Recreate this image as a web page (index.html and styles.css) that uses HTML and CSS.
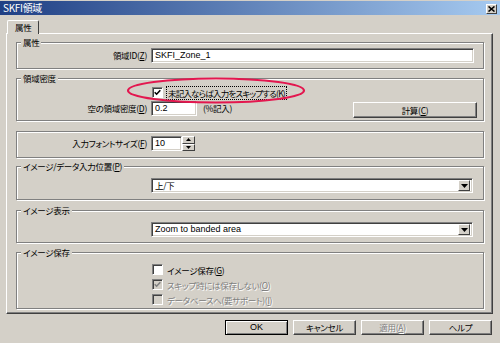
FILE: index.html
```html
<!DOCTYPE html>
<html lang="ja">
<head>
    <meta charset="UTF-8">
    <title>SKFI領域</title>
    <link rel="stylesheet" href="styles.css">
</head>
<body>
    <div class="window">
        <div class="titlebar">
            <span class="title">SKFI領域</span>
            <span class="close"><svg width="7" height="6" viewBox="0 0 7 6"><path d="M0.5 0.5 L6.5 5.5 M6.5 0.5 L0.5 5.5" stroke="#000" stroke-width="1.6"/></svg></span>
        </div>
        <div class="tabs">
            <div class="tab">属性</div>
        </div>
        <div class="panel">
            <div class="group g1">
                <div class="legend">属性</div>
                <div class="row">
                    <span class="lbl">領域ID(<u>Z</u>)</span>
                    <div class="edit latin id">SKFI_Zone_1</div>
                </div>
            </div>
            <div class="group g2">
                <div class="legend">領域密度</div>
                <div class="check-row">
                    <span class="box"><svg width="7" height="7" viewBox="0 0 7 7"><path d="M0.7 3.3 L2.6 5.2 L6.3 1.2" stroke="#000" stroke-width="1.6" fill="none"/></svg></span>
                    <span class="focus">未記入ならば入力をスキップする(<u>K</u>)</span>
                </div>
                <div class="row top">
                    <span class="lbl">空の領域密度(<u>D</u>)</span>
                    <div class="edit latin density">0.2</div>
                    <span class="unit">(%記入)</span>
                    <div class="btn calc">計算(<u>C</u>)</div>
                </div>
            </div>
            <div class="group g3">
                <div class="row">
                    <span class="lbl">入力フォントサイズ(<u>F</u>)</span>
                    <div class="edit latin size">10</div>
                    <div class="spin">
                        <span class="spin-btn"><svg width="5" height="3" viewBox="0 0 5 3"><path d="M0 3 L2.5 0 L5 3 Z" fill="#000"/></svg></span>
                        <span class="spin-btn"><svg width="5" height="3" viewBox="0 0 5 3"><path d="M0 0 L2.5 3 L5 0 Z" fill="#000"/></svg></span>
                    </div>
                </div>
            </div>
            <div class="group g4">
                <div class="legend">イメージ/データ入力位置(<u>P</u>)</div>
                <div class="row">
                    <span class="lbl"></span>
                    <div class="edit combo">
                        <span>上/下</span>
                        <span class="drop"><svg width="7" height="4" viewBox="0 0 7 4"><path d="M0 0 L3.5 4 L7 0 Z" fill="#000"/></svg></span>
                    </div>
                </div>
            </div>
            <div class="group g5">
                <div class="legend">イメージ表示</div>
                <div class="row">
                    <span class="lbl"></span>
                    <div class="edit combo latin">
                        <span>Zoom to banded area</span>
                        <span class="drop"><svg width="7" height="4" viewBox="0 0 7 4"><path d="M0 0 L3.5 4 L7 0 Z" fill="#000"/></svg></span>
                    </div>
                </div>
            </div>
            <div class="group g6">
                <div class="legend">イメージ保存</div>
                <div class="check-row">
                    <span class="box"></span>
                    <span>イメージ保存(<u>G</u>)</span>
                </div>
                <div class="check-row off">
                    <span class="box"><svg width="7" height="7" viewBox="0 0 7 7"><path d="M0.7 3.3 L2.6 5.2 L6.3 1.2" stroke="#808080" stroke-width="1.6" fill="none"/></svg></span>
                    <span>スキップ時には保存しない(<u>O</u>)</span>
                </div>
                <div class="check-row off">
                    <span class="box"></span>
                    <span>データベースへ(要サポート)(<u>I</u>)</span>
                </div>
            </div>
        </div>
        <div class="buttons">
            <div class="btn default latin">OK</div>
            <div class="btn">キャンセル</div>
            <div class="btn off">適用(<u>A</u>)</div>
            <div class="btn">ヘルプ</div>
        </div>
        <svg class="mark" width="182" height="28" viewBox="0 0 182 28"><ellipse cx="90" cy="13.5" rx="88" ry="12" fill="none" stroke="#e3174f" stroke-width="2.2"/></svg>
    </div>
</body>
</html>
```

FILE: styles.css
```css
* {
    box-sizing: border-box;
}
body {
    margin: 0;
    background: #d4d0c8;
    font-family: "Noto Sans CJK JP", "Liberation Sans", sans-serif;
    font-size: 8.5px;
    letter-spacing: -0.3px;
    font-feature-settings: "palt";
    color: #000;
}
u {
    text-decoration-thickness: 1px;
}
.latin {
    font-family: "Liberation Sans", "Noto Sans CJK JP", sans-serif;
    font-size: 9px;
    letter-spacing: 0;
}
.window {
    width: 500px;
    height: 343px;
    padding-top: 1px;
    position: relative;
    overflow: hidden;
}

/* title bar */
.titlebar {
    height: 14px;
    background: linear-gradient(to right, #1f3f84, #a6caf0);
    display: flex;
    align-items: center;
    justify-content: space-between;
    padding: 0 3px 0 3px;
    color: #fff;
}
.title {
    font-size: 10px;
    line-height: 14px;
}
.close {
    width: 11px;
    height: 10px;
    margin-top: 2px;
    background: #d4d0c8;
    border: 1px solid;
    border-color: #fff #404040 #404040 #fff;
    display: flex;
    align-items: center;
    justify-content: center;
}

/* tab */
.tabs {
    display: flex;
    padding-left: 7px;
    margin-top: 5px;
}
.tab {
    height: 14px;
    padding: 0 7px;
    line-height: 13px;
    border: 1px solid;
    border-color: #fff #404040 transparent #fff;
    border-bottom: none;
    border-radius: 2px 2px 0 0;
    background: #d4d0c8;
    margin-bottom: -1px;
    position: relative;
    z-index: 1;
}
.panel {
    margin-left: 6px;
    width: 487px;
    height: 281px;
    border: 1px solid;
    border-color: #fff #404040 #404040 #fff;
    box-shadow: inset -1px -1px 0 #808080;
    padding-left: 9px;
}

/* groups: legend sits on the top line */
.group {
    width: 468px;
    border: 1px solid #808080;
    box-shadow: inset 1px 1px 0 #fff, 1px 1px 0 #fff;
}
.legend {
    width: fit-content;
    height: 12px;
    line-height: 12px;
    margin: -7px 0 0 4px;
    padding: 0 2px;
    background: #d4d0c8;
    white-space: nowrap;
}
.g1 { margin-top: 8px; height: 27px; }
.g2 { margin-top: 9px; height: 43px; }
.g3 { margin-top: 10px; height: 27px; padding-top: 4px; }
.g4 { margin-top: 8px; height: 34px; }
.g5 { margin-top: 10px; height: 33px; }
.g6 { margin-top: 9px; height: 57px; }
.g1 .legend { margin-bottom: 0; }
.g2 .legend { margin-bottom: 2px; }
.g4 .legend { margin-bottom: 6px; }
.g5 .legend { margin-bottom: 6px; }
.g6 .legend { margin-bottom: 4px; }

.row {
    display: flex;
    align-items: center;
    height: 15px;
}
.row.top {
    align-items: flex-start;
    height: 17px;
    margin-top: 2px;
}
.lbl {
    width: 130px;
    margin-right: 4px;
    text-align: right;
    white-space: nowrap;
    line-height: 15px;
}

/* edits */
.edit {
    height: 15px;
    background: #fff;
    border: 1px solid;
    border-color: #808080 #fff #fff #808080;
    box-shadow: inset 1px 1px 0 #404040, inset -1px -1px 0 #d4d0c8;
    padding: 0 2px 0 3px;
    line-height: 13px;
    white-space: nowrap;
}
.id { width: 323px; }
.density { width: 46px; }
.size { width: 31px; }
.unit {
    margin-left: 6px;
    line-height: 15px;
}
.spin {
    width: 13px;
    height: 15px;
    display: flex;
    flex-direction: column;
}
.spin-btn {
    flex: 1;
    background: #d4d0c8;
    border: 1px solid;
    border-color: #fff #404040 #404040 #fff;
    display: flex;
    align-items: center;
    justify-content: center;
}
.combo {
    width: 322px;
    display: flex;
    justify-content: space-between;
    align-items: center;
    padding-right: 2px;
}
.drop {
    width: 12px;
    height: 11px;
    background: #d4d0c8;
    border: 1px solid;
    border-color: #fff #404040 #404040 #fff;
    display: flex;
    align-items: center;
    justify-content: center;
}

/* check boxes */
.check-row {
    display: flex;
    align-items: center;
    height: 15px;
    padding-left: 135px;
    white-space: nowrap;
}
.g2 .check-row {
    height: 13px;
}
.box {
    width: 11px;
    height: 11px;
    margin-right: 4px;
    background: #fff;
    border: 1px solid;
    border-color: #808080 #fff #fff #808080;
    box-shadow: inset 1px 1px 0 #404040;
    display: flex;
    align-items: center;
    justify-content: center;
}
.focus {
    outline: 1px dotted #000;
    padding: 0 1px;
    line-height: 12px;
    letter-spacing: -0.8px;
}
.off {
    color: #808080;
    text-shadow: 1px 1px 0 #fff;
}
.off .box {
    background: #d4d0c8;
}

/* buttons */
.btn {
    width: 63px;
    height: 15px;
    background: #d4d0c8;
    border: 1px solid;
    border-color: #fff #404040 #404040 #fff;
    box-shadow: inset -1px -1px 0 #808080;
    text-align: center;
    line-height: 13px;
    white-space: nowrap;
}
.calc {
    width: 124px;
    height: 16px;
    line-height: 14px;
    margin: 1px 6px 0 auto;
}
.btn.default {
    border-color: #000;
    box-shadow: inset 1px 1px 0 #fff, inset -1px -1px 0 #808080;
}
.buttons {
    display: flex;
    gap: 5px;
    padding-left: 225px;
    margin-top: 6px;
}

/* red annotation ring */
.mark {
    position: absolute;
    left: 126px;
    top: 77px;
}
```
